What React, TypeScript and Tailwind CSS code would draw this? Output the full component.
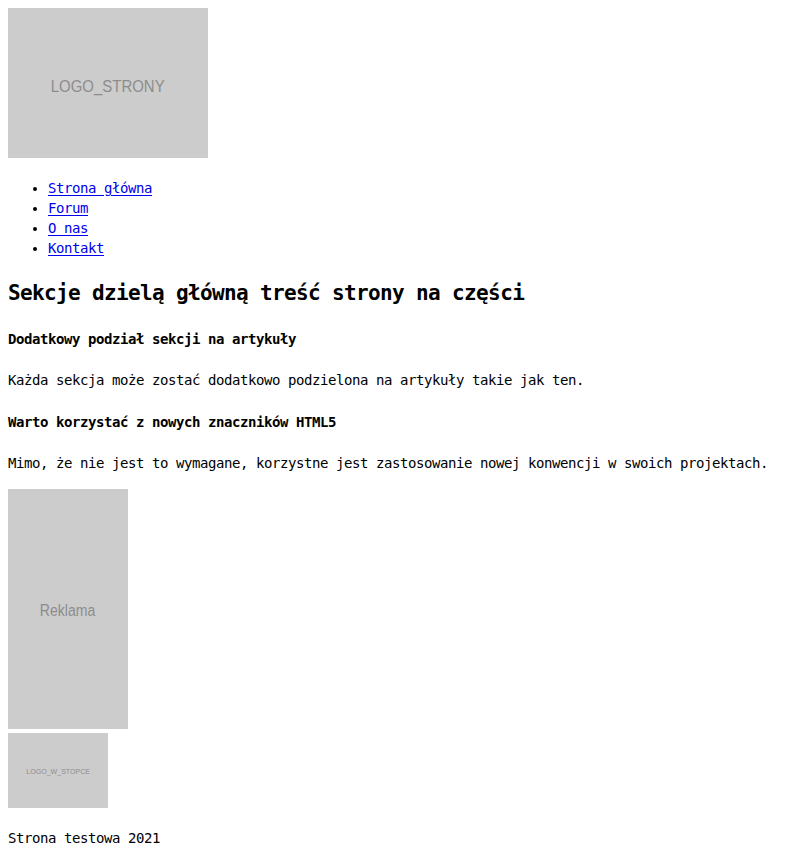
// Test page: header logo, nav list, section with articles, aside ad and footer
const mono = "font-['DejaVu_Sans_Mono',monospace]";

function Placeholder({
  w,
  h,
  label,
  size,
}: {
  w: string;
  h: string;
  label: string;
  size: string;
}) {
  return (
    <div
      className={`${w} ${h} bg-[#cccccc] flex items-center justify-center font-['Liberation_Sans',sans-serif] text-[#8c8c8c] tracking-normal ${size}`}
    >
      <span className="scale-x-[0.88] whitespace-nowrap">{label}</span>
    </div>
  );
}

const links = ["Strona główna", "Forum", "O nas", "Kontakt"];

export default function App() {
  return (
    <div
      className={`${mono} bg-white text-black text-[14px] tracking-[-0.43px] leading-[20px] px-2 pt-2 pb-[11px]`}
    >
      {/* Header */}
      <header>
        <Placeholder w="w-[200px]" h="h-[150px]" label="LOGO_STRONY" size="text-[17px] pt-[7px]" />
        <nav>
          <ul className="mt-5 pl-10 list-disc">
            {links.map((l) => (
              <li key={l}>
                <a href="#" className="text-[#0000ee] underline underline-offset-2">
                  {l}
                </a>
              </li>
            ))}
          </ul>
        </nav>
      </header>

      {/* Main content */}
      <section>
        <h1 className="mt-5 text-[21px] tracking-[-0.64px] leading-[30px] font-bold">
          Sekcje dzielą główną treść strony na części
        </h1>
        <article>
          <h4 className="mt-[21px] font-bold">Dodatkowy podział sekcji na artykuły</h4>
          <p className="mt-[21px]">
            Każda sekcja może zostać dodatkowo podzielona na artykuły takie jak ten.
          </p>
        </article>
        <article>
          <h4 className="mt-[22px] font-bold">Warto korzystać z nowych znaczników HTML5</h4>
          <p className="mt-[21px]">
            Mimo, że nie jest to wymagane, korzystne jest zastosowanie nowej konwencji w swoich projektach.
          </p>
        </article>
      </section>

      {/* Aside */}
      <aside className="mt-4">
        <Placeholder w="w-[120px]" h="h-[240px]" label="Reklama" size="text-[16px] pt-[4px]" />
      </aside>

      {/* Footer */}
      <footer className="mt-1">
        <Placeholder w="w-[100px]" h="h-[75px]" label="LOGO_W_STOPCE" size="text-[8px] pt-[3px]" />
        <p className="mt-5">Strona testowa 2021</p>
      </footer>
    </div>
  );
}
